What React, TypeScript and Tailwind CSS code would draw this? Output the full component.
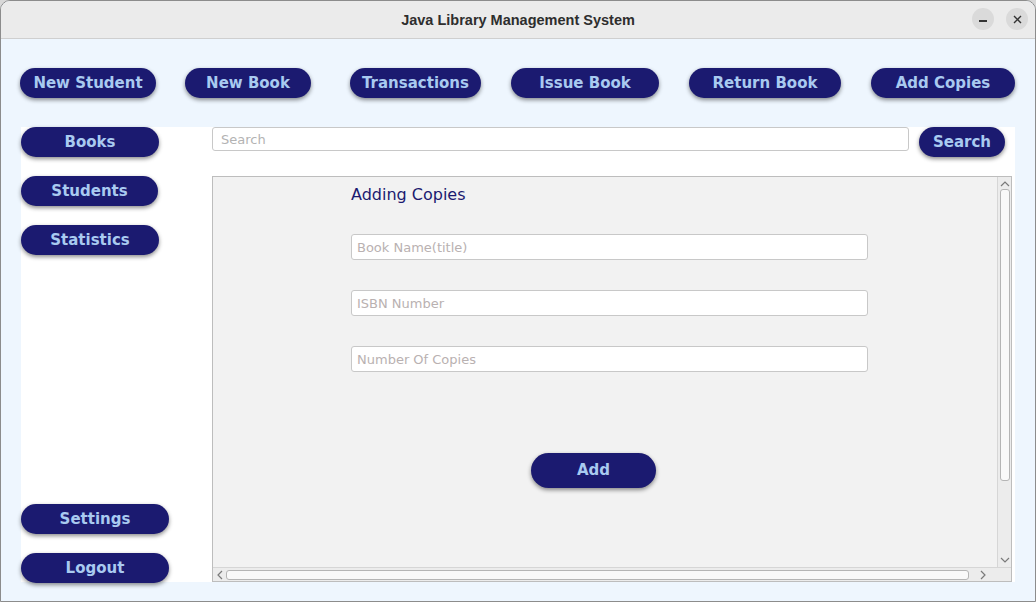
import React from 'react';

const btn =
  "flex items-center justify-center rounded-full bg-[#1b1a70] text-[#a9caf0] font-bold text-[15px] shadow-[0_2px_4px_rgba(0,0,0,0.45)] [font-family:'DejaVu_Sans',sans-serif]";

const Chevron: React.FC<{ dir: 'up' | 'down' | 'left' | 'right' }> = ({ dir }) => {
  const paths: Record<string, string> = {
    up: 'M1 6 L5 2 L9 6',
    down: 'M1 2 L5 6 L9 2',
    left: 'M6 1 L2 5 L6 9',
    right: 'M2 1 L6 5 L2 9',
  };
  const vertical = dir === 'up' || dir === 'down';
  return (
    <svg
      width={vertical ? 10 : 8}
      height={vertical ? 8 : 10}
      viewBox={vertical ? '0 0 10 8' : '0 0 8 10'}
      fill="none"
      stroke="#7a7a7a"
      strokeWidth="1.2"
    >
      <path d={paths[dir]} />
    </svg>
  );
};

const TextField: React.FC<{ placeholder: string; className?: string }> = ({ placeholder, className }) => (
  <div
    className={`h-[26px] w-[517px] rounded-[3px] border border-[#c8c8c8] bg-white pl-[5px] pt-[2px] flex items-center text-[13px] text-[#b9b1b1] [font-family:'DejaVu_Sans',sans-serif] ${className ?? ''}`}
  >
    {placeholder}
  </div>
);

export default function App() {
  const topButtons: { label: string; w: string; ml: string }[] = [
    { label: 'New Student', w: 'w-[136px]', ml: 'ml-[19px]' },
    { label: 'New Book', w: 'w-[126px]', ml: 'ml-[29px]' },
    { label: 'Transactions', w: 'w-[131px]', ml: 'ml-[39px]' },
    { label: 'Issue Book', w: 'w-[148px]', ml: 'ml-[30px]' },
    { label: 'Return Book', w: 'w-[152px]', ml: 'ml-[30px]' },
    { label: 'Add Copies', w: 'w-[144px]', ml: 'ml-[30px]' },
  ];

  return (
    <div className="w-[1036px] h-[602px] bg-[#d8d8d8]">
      <div className="w-[1036px] h-[602px] flex flex-col rounded-t-[10px] overflow-hidden border border-[#8c8c8c] bg-[#eef6fe]">
        {/* Title bar */}
        <div className="h-[38px] shrink-0 bg-[#ebebeb] border-b border-[#cfcfcf] relative flex items-center justify-center">
          <span className="pt-[2px] text-[14.5px] font-bold text-[#2e2e2e] [font-family:'Liberation_Sans',sans-serif]">
            Java Library Management System
          </span>
          <div className="absolute right-[7px] top-[7px] flex gap-[12px]">
            <div className="w-[22px] h-[22px] rounded-full bg-[#dadada] flex items-center justify-center">
              <div className="w-[8px] h-[1.5px] bg-[#333] mt-[4px]" />
            </div>
            <div className="w-[22px] h-[22px] rounded-full bg-[#dadada] flex items-center justify-center">
              <svg width="9" height="9" viewBox="0 0 9 9" stroke="#333" strokeWidth="1.4">
                <path d="M1 1 L8 8 M8 1 L1 8" />
              </svg>
            </div>
          </div>
        </div>

        {/* Top buttons */}
        <div className="flex pt-[29px]">
          {topButtons.map((b) => (
            <div key={b.label} className={`${btn} ${b.w} ${b.ml} h-[30px]`}>
              {b.label}
            </div>
          ))}
        </div>

        {/* Main panel */}
        <div className="ml-[20px] mt-[29px] w-[994px] h-[455px] bg-white flex">
          {/* Sidebar */}
          <div className="w-[191px] flex flex-col mb-[-1px]">
            <div className={`${btn} w-[138px] h-[30px]`}>Books</div>
            <div className={`${btn} w-[137px] h-[30px] mt-[19px]`}>Students</div>
            <div className={`${btn} w-[138px] h-[30px] mt-[19px]`}>Statistics</div>
            <div className={`${btn} w-[148px] h-[30px] mt-auto`}>Settings</div>
            <div className={`${btn} w-[148px] h-[30px] mt-[19px]`}>Logout</div>
          </div>

          {/* Right side */}
          <div className="flex-1 flex flex-col">
            <div className="flex items-start h-[30px]">
              <div className="w-[697px] h-[24px] rounded-[3px] border border-[#c8c8c8] bg-white pl-[8px] pt-[1px] flex items-center text-[13px] text-[#b3b3b3] [font-family:'DejaVu_Sans',sans-serif]">
                Search
              </div>
              <div className={`${btn} w-[86px] h-[30px] ml-[10px]`}>Search</div>
            </div>

            <div className="mt-[19px] w-[800px] h-[406px] border border-[#bdbdbd] bg-[#f2f2f2] flex flex-col">
              <div className="flex-1 flex min-h-0">
                {/* Form */}
                <div className="flex-1 flex flex-col pl-[138px] pt-[7px]">
                  <div className="h-[20px] pt-[1px] text-[16px] leading-[20px] text-[#1b1a70] [font-family:'DejaVu_Sans',sans-serif]">
                    Adding Copies
                  </div>
                  <TextField placeholder="Book Name(title)" className="mt-[30px]" />
                  <TextField placeholder="ISBN Number" className="mt-[30px]" />
                  <TextField placeholder="Number Of Copies" className="mt-[30px]" />
                  <div className={`${btn} w-[125px] h-[35px] mt-[81px] ml-[180px]`}>Add</div>
                </div>
                {/* Vertical scrollbar */}
                <div className="w-[14px] bg-[#ececec] border-l border-[#d6d6d6] flex flex-col items-center">
                  <div className="h-[12px] flex items-center pt-[2px]">
                    <Chevron dir="up" />
                  </div>
                  <div className="w-[10px] h-[292px] rounded-[3px] border border-[#b5b5b5] bg-[#f9f9f9]" />
                  <div className="flex-1" />
                  <div className="h-[12px] flex items-center pb-[2px]">
                    <Chevron dir="down" />
                  </div>
                </div>
              </div>
              {/* Horizontal scrollbar */}
              <div className="h-[14px] flex bg-[#ececec] border-t border-[#d6d6d6]">
                <div className="flex-1 flex items-center">
                  <div className="w-[13px] flex justify-center">
                    <Chevron dir="left" />
                  </div>
                  <div className="w-[743px] h-[10px] rounded-[3px] border border-[#b5b5b5] bg-[#f9f9f9]" />
                  <div className="flex-1 flex justify-center">
                    <Chevron dir="right" />
                  </div>
                </div>
                <div className="w-[14px] bg-[#ececec]" />
              </div>
            </div>
          </div>
        </div>
      </div>
    </div>
  );
}
